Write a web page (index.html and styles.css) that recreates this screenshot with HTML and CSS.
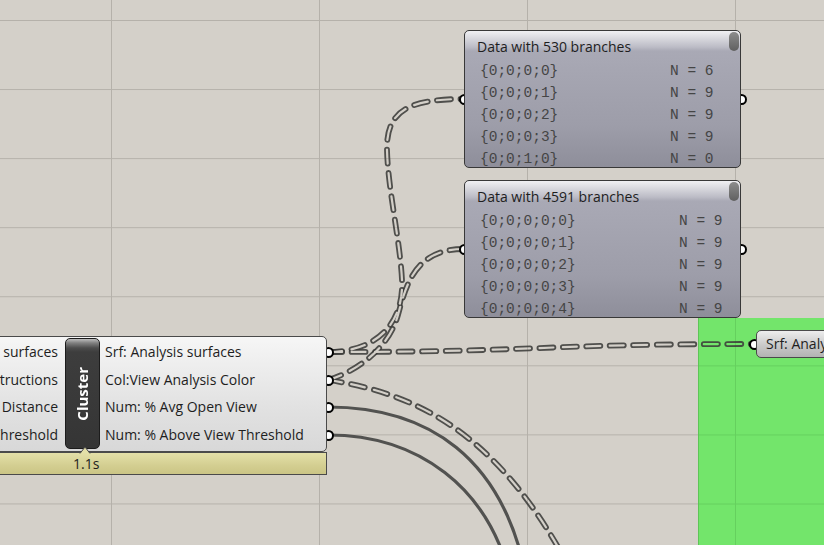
FILE: index.html
```html
<!DOCTYPE html>
<html>
<head>
<meta charset="utf-8">
<title>Grasshopper canvas</title>
<link rel="stylesheet" href="styles.css">
</head>
<body>
<div class="canvas">
  <div class="group"></div>

  <svg class="wires" width="824" height="545" viewBox="0 0 824 545">
    <defs>
      <mask id="holes" maskUnits="userSpaceOnUse" x="0" y="0" width="824" height="545">
        <rect x="0" y="0" width="824" height="545" fill="#fff"/>
        <g class="hole">
          <path d="M328,352 C375,352 404,325 402,280 C400,240 388,190 387,150 C386,110 410,99 464,99"/>
          <path d="M328,380 C355,372 388,350 398,315 C406,285 415,249 464,249"/>
          <path d="M328,352 C540,352 540,344 755,344"/>
          <path d="M328,380 C420,394 512,436 590,610"/>
        </g>
      </mask>
    </defs>
    <g class="solid">
      <path d="M328,407 C420,407 510,450 530,600"/>
      <path d="M328,435 C410,435 495,480 515,600"/>
    </g>
    <g class="dashed" mask="url(#holes)">
      <path d="M328,352 C375,352 404,325 402,280 C400,240 388,190 387,150 C386,110 410,99 464,99"/>
      <path d="M328,380 C355,372 388,350 398,315 C406,285 415,249 464,249"/>
      <path d="M328,352 C540,352 540,344 755,344"/>
      <path d="M328,380 C420,394 512,436 590,610"/>
    </g>
  </svg>

  <div class="panel panel-a">
    <span class="grip grip-in"></span>
    <span class="grip grip-out"></span>
    <div class="panel-body">
      <div class="panel-title">Data with 530 branches</div>
      <div class="thumb"></div>
      <ul class="rows">
        <li><span>{0;0;0;0}</span><span>N = 6</span></li>
        <li><span>{0;0;0;1}</span><span>N = 9</span></li>
        <li><span>{0;0;0;2}</span><span>N = 9</span></li>
        <li><span>{0;0;0;3}</span><span>N = 9</span></li>
        <li><span>{0;0;1;0}</span><span>N = 0</span></li>
      </ul>
    </div>
  </div>

  <div class="panel panel-b">
    <span class="grip grip-in"></span>
    <span class="grip grip-out"></span>
    <div class="panel-body">
      <div class="panel-title">Data with 4591 branches</div>
      <div class="thumb"></div>
      <ul class="rows">
        <li><span>{0;0;0;0;0}</span><span>N = 9</span></li>
        <li><span>{0;0;0;0;1}</span><span>N = 9</span></li>
        <li><span>{0;0;0;0;2}</span><span>N = 9</span></li>
        <li><span>{0;0;0;0;3}</span><span>N = 9</span></li>
        <li><span>{0;0;0;0;4}</span><span>N = 9</span></li>
      </ul>
    </div>
  </div>

  <div class="cluster">
    <span class="grip grip-o1"></span>
    <span class="grip grip-o2"></span>
    <span class="grip grip-o3"></span>
    <span class="grip grip-o4"></span>
    <div class="cluster-body">
      <div class="params params-in">
        <span>Srf: Analysis surfaces</span>
        <span>Geo: Obstructions</span>
        <span>Num: View Distance</span>
        <span>Num: View Threshold</span>
      </div>
      <div class="cluster-box"><span class="cluster-name">Cluster</span></div>
      <div class="params params-out">
        <span>Srf: Analysis surfaces</span>
        <span>Col:View Analysis Color</span>
        <span>Num: % Avg Open View</span>
        <span>Num: % Above View Threshold</span>
      </div>
    </div>
    <div class="cluster-time">
      <svg class="time-tip" width="12" height="8" viewBox="0 0 12 8"><path d="M1,7.5 L6,1 L11,7.5" fill="#e4e0a8" stroke="#4a4a4a" stroke-width="1"/></svg>
      <span>1.1s</span>
    </div>
  </div>

  <div class="srf">
    <span class="grip grip-srf"></span>
    <div class="srf-body">Srf: Analysis surfaces</div>
  </div>
</div>
</body>
</html>
```
FILE: styles.css
```css
* { box-sizing: border-box; }
html, body { margin: 0; padding: 0; }
body {
  width: 824px;
  height: 545px;
  overflow: hidden;
  font-family: "Open Sans", "Noto Sans", sans-serif;
  color: #1e1e1e;
}

.canvas {
  position: relative;
  width: 824px;
  height: 545px;
  overflow: hidden;
  background-color: #d4d0c9;
  background-image:
    linear-gradient(to right, #b5b1aa 1px, transparent 1px),
    linear-gradient(to bottom, #b5b1aa 1px, transparent 1px);
  background-size: 208px 100%, 100% 69.07px;
  background-position: 111px 0, 0 20px;
}

.group {
  position: absolute;
  left: 698px;
  top: 318px;
  width: 140px;
  height: 240px;
  background-color: #73e56b;
  border-left: 1px solid #5ec556;
  background-image:
    linear-gradient(to right, #65d05e 1px, transparent 1px),
    linear-gradient(to bottom, #65d05e 1px, transparent 1px);
  background-size: 208px 100%, 100% 69.07px;
  background-position: 36px 0, 0 47.4px;
}

.wires {
  position: absolute;
  left: 0;
  top: 0;
}
.wires path { fill: none; }
.hole path {
  stroke: #000;
  stroke-width: 2.2;
  stroke-linecap: round;
  stroke-dasharray: 14 9.5;
}
.dashed path {
  stroke: rgba(60, 60, 58, 0.88);
  stroke-width: 5.8;
  stroke-linecap: round;
  stroke-dasharray: 14 9.5;
}
.solid path {
  stroke: #525250;
  stroke-width: 3.2;
}

.grip {
  position: absolute;
  width: 11px;
  height: 11px;
  border: 2.5px solid #000;
  border-radius: 50%;
  background: #fff;
}

/* data panels */
.panel {
  position: absolute;
  left: 464px;
  width: 277px;
  height: 138px;
  z-index: 1;
}
.panel-a { top: 30px; }
.panel-b { top: 180px; }
.panel .grip-in { left: -5.5px; top: 63.5px; }
.panel .grip-out { left: 272px; top: 63.5px; }

.panel-body {
  position: relative;
  height: 100%;
  border: 1px solid #383838;
  border-radius: 5px;
  overflow: hidden;
  background: linear-gradient(#f0f0f3 0, #d6d6dc 8px, #bcbcc6 16px, #a9a9b5 20px, #9d9da9 70%, #8e8e9a 100%);
}
.panel-title {
  height: 29px;
  padding-left: 12px;
  line-height: 31px;
  font-size: 14px;
  color: #1e1e1e;
  white-space: nowrap;
}
.thumb {
  position: absolute;
  right: 1px;
  top: 1px;
  width: 10px;
  height: 19px;
  border-radius: 5px;
  background: linear-gradient(#8c8c8c, #606060);
}
.rows {
  list-style: none;
  margin: 0;
  padding: 0 0 0 15px;
  font-family: "Liberation Mono", "Courier New", monospace;
  font-size: 14.5px;
  color: #454545;
}
.rows li {
  display: grid;
  grid-template-columns: 190px auto;
  height: 22.1px;
  line-height: 22.1px;
  white-space: pre;
}
.panel-b .rows li { grid-template-columns: 199px auto; }

/* cluster component */
.cluster {
  position: absolute;
  left: -180px;
  top: 336px;
  width: 507px;
  z-index: 1;
}
.cluster .grip-o1 { right: -6.5px; top: 10.5px; }
.cluster .grip-o2 { right: -6.5px; top: 38.5px; }
.cluster .grip-o3 { right: -6.5px; top: 65.5px; }
.cluster .grip-o4 { right: -6.5px; top: 93.5px; }

.cluster-body {
  position: relative;
  display: flex;
  height: 116px;
  border: 1px solid #4a4a4a;
  border-radius: 5px;
  background: linear-gradient(#f6f6f6, #e2e2e2 60%, #d8d8d8);
}
.params {
  display: grid;
  grid-template-rows: repeat(4, 27.7px);
  padding-top: 1px;
  font-size: 14px;
  line-height: 27.7px;
  white-space: nowrap;
  color: #1e1e1e;
}
.params-in {
  flex: 1;
  text-align: right;
  padding-right: 7px;
}
.params-out {
  width: 226px;
  padding-left: 5px;
}
.cluster-box {
  width: 35px;
  margin: 1px 0 2px;
  display: flex;
  align-items: center;
  justify-content: center;
  border: 1px solid #1c1c1c;
  border-radius: 5px;
  background: linear-gradient(#bdbdbd 0, #808080 4px, #4c4c4c 9px, #3d3d3d 13px, #353535 100%);
}
.cluster-name {
  writing-mode: vertical-rl;
  transform: rotate(180deg);
  color: #fff;
  font-weight: 700;
  font-size: 15px;
  line-height: 1;
}
.cluster-time {
  position: relative;
  height: 23px;
  padding-left: 252px;
  border: 1px solid #4a4a4a;
  background: linear-gradient(#e4e0a8, #d3ce91 60%, #cbc585);
  font-size: 14px;
  line-height: 21px;
  color: #1e1e1e;
}
.time-tip {
  position: absolute;
  left: 258px;
  top: -7px;
}

/* Srf component at right edge */
.srf {
  position: absolute;
  left: 756px;
  top: 330px;
  width: 120px;
  height: 28px;
  z-index: 1;
}
.srf .grip-srf { left: -7.5px; top: 8.5px; }
.srf-body {
  position: relative;
  height: 100%;
  padding-left: 9px;
  border: 1px solid #4a4a4a;
  border-radius: 5px;
  background: linear-gradient(#ededed, #c9c9c9 55%, #b3b3b3);
  font-size: 14px;
  line-height: 26px;
  white-space: nowrap;
  color: #1e1e1e;
}
```
